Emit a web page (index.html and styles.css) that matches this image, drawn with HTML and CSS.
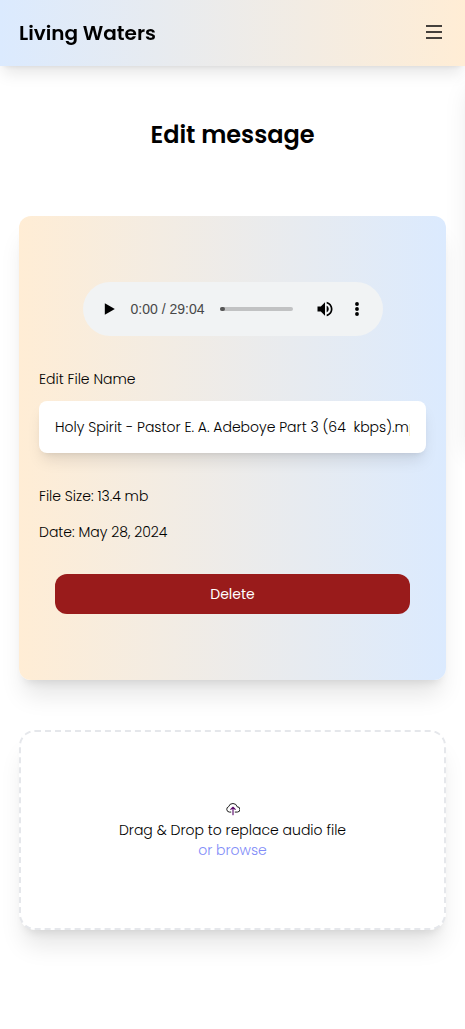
FILE: index.html
```html
<!DOCTYPE html>
<html lang="en">
<head>
<meta charset="utf-8">
<meta name="viewport" content="width=device-width, initial-scale=1">
<title>Living Waters</title>
<link rel="stylesheet" href="styles.css">
</head>
<body>
<header class="navbar">
  <a class="brand" href="#">Living Waters</a>
  <button class="menu-toggle" type="button" aria-label="Open menu">
    <svg width="24" height="24" viewBox="0 0 24 24" fill="none" stroke="currentColor" stroke-width="2"><path d="M4 6h16M4 12h16M4 18h16"/></svg>
  </button>
</header>
<nav class="drawer" aria-label="Menu"></nav>
<main class="page">
  <h1 class="title">Edit message</h1>
  <form class="card">
    <div class="player">
      <button class="player-button" type="button" aria-label="Play">
        <svg width="20" height="20" viewBox="0 0 24 24" fill="currentColor"><path d="M7 5v14l12-7z"/></svg>
      </button>
      <span class="time">0:00 / 29:04</span>
      <input class="seek" type="range" min="0" max="1744" value="0" aria-label="Seek">
      <button class="player-button" type="button" aria-label="Mute">
        <svg width="20" height="20" viewBox="0 0 24 24" fill="currentColor"><path d="M3 9v6h4l5 5V4L7 9H3zm13.500 3c0-1.770-1.020-3.290-2.500-4.030v8.050c1.480-.73 2.500-2.250 2.500-4.020zM14 3.230v2.060c2.890.86 5 3.540 5 6.710s-2.110 5.850-5 6.710v2.060c4.010-.91 7-4.490 7-8.770s-2.990-7.860-7-8.770z"/></svg>
      </button>
      <button class="player-button" type="button" aria-label="More options">
        <svg width="20" height="20" viewBox="0 0 24 24" fill="currentColor"><circle cx="12" cy="6" r="2.300"/><circle cx="12" cy="12" r="2.300"/><circle cx="12" cy="18" r="2.300"/></svg>
      </button>
    </div>
    <label class="label" for="filename">Edit File Name</label>
    <input class="field" id="filename" type="text" value="Holy Spirit - Pastor E. A. Adeboye Part 3 (64  kbps).mp3">
    <p class="detail">File Size: 13.4 mb</p>
    <p class="detail">Date: May 28, 2024</p>
    <button class="delete" type="button">Delete</button>
  </form>
  <section class="dropzone">
    <svg width="14" height="14" viewBox="0 0 16 16" fill="none" stroke="currentColor" stroke-linecap="round" stroke-linejoin="round"><path d="M5.500 11.500H3.800A3.200 3.200 0 0 1 3 5.300 5.100 5.100 0 0 1 12.800 5.500a3 3 0 0 1 .2 6h-2.500"/><path d="M8 14.500V6M5.500 8.500 8 6l2.500 2.500" stroke="#5b0a6b" stroke-width="1.300"/></svg>
    <p class="drop-text">Drag &amp; Drop to replace audio file</p>
    <button class="browse" type="button">or browse</button>
  </section>
</main>
</body>
</html>
```
FILE: styles.css
```css
* {
  box-sizing: border-box;
}

body {
  margin: 0;
  min-height: 100vh;
  overflow-x: hidden;
  background: #fff;
  color: #000;
  font: 300 14px/20px Poppins, Inter, "Open Sans", sans-serif;
}

button,
input {
  margin: 0;
  border: 0;
  font: inherit;
  color: inherit;
}

.navbar {
  position: relative;
  z-index: 2;
  display: flex;
  align-items: center;
  justify-content: space-between;
  height: 66px;
  padding: 0 19px;
  background: linear-gradient(to right, #dbeafe, #ffedd5);
  box-shadow: 0 10px 15px -3px rgba(0, 0, 0, .1), 0 4px 6px -4px rgba(0, 0, 0, .1);
}

.brand {
  color: #000;
  font-size: 20px;
  font-weight: 600;
  line-height: 28px;
  text-decoration: none;
}

.menu-toggle {
  display: flex;
  padding: 0 0 2px;
  background: none;
  color: #44403c;
}

.drawer {
  position: fixed;
  top: 66px;
  left: 100%;
  z-index: 1;
  width: 240px;
  height: 372px;
  box-shadow: 0 20px 25px -5px rgba(0, 0, 0, .1), 0 8px 10px -6px rgba(0, 0, 0, .1);
}

.page {
  padding: 53px 19px 99px;
}

.title {
  margin: 0 0 65px;
  font-size: 24px;
  font-weight: 600;
  line-height: 32px;
  text-align: center;
}

.card {
  display: flex;
  flex-direction: column;
  padding: 66px 20px;
  border-radius: 12px;
  background: linear-gradient(to right, #ffedd5, #dbeafe);
  box-shadow: 0 20px 25px -5px rgba(0, 0, 0, .1), 0 8px 10px -6px rgba(0, 0, 0, .1);
}

.player {
  display: flex;
  align-items: center;
  align-self: center;
  width: 300px;
  max-width: 100%;
  height: 54px;
  margin-bottom: 33px;
  padding: 0 10px;
  border-radius: 27px;
  background: #f1f3f4;
}

.player-button {
  display: flex;
  align-items: center;
  justify-content: center;
  flex: none;
  width: 32px;
  height: 32px;
  padding: 0;
  background: none;
}

.time {
  flex: none;
  margin: 0 16px 0 6px;
  color: #484848;
  font-family: "Liberation Sans", Arial, sans-serif;
  font-weight: 400;
}

.seek {
  appearance: none;
  flex: 1;
  min-width: 0;
  height: 4px;
  margin-right: 16px;
  border-radius: 2px;
  background: #c1c2c3;
}

.seek::-webkit-slider-thumb {
  appearance: none;
  width: 5px;
  height: 4px;
  border-radius: 2px;
  background: #555;
}

.label {
  margin-bottom: 12px;
}

.field {
  width: 100%;
  height: 52px;
  margin-bottom: 33px;
  padding: 0 16px;
  border-radius: 8px;
  background: #fff;
  box-shadow: 0 10px 15px -3px rgba(0, 0, 0, .1), 0 4px 6px -4px rgba(0, 0, 0, .1);
}

.detail {
  margin: 0 0 16px;
}

.delete {
  height: 40px;
  margin: 16px 16px 0;
  border-radius: 12px;
  background: #991b1b;
  color: #fff;
  font-weight: 400;
}

.dropzone {
  display: flex;
  flex-direction: column;
  align-items: center;
  justify-content: center;
  height: 200px;
  margin-top: 50px;
  padding-top: 2px;
  border: 2px dashed #e5e7eb;
  border-radius: 16px;
  background: #fff;
  box-shadow: 0 20px 25px -5px rgba(0, 0, 0, .1), 0 8px 10px -6px rgba(0, 0, 0, .1);
}

.drop-text {
  margin: 4px 0 0;
}

.browse {
  padding: 0;
  background: none;
  color: #818cf8;
}
```
